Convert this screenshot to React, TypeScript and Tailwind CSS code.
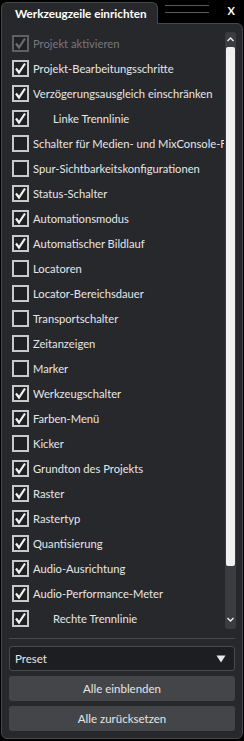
import React from "react";

type Item = { label: string; checked: boolean; indent?: boolean; disabled?: boolean };

const items: Item[] = [
  { label: "Projekt aktivieren", checked: true, disabled: true },
  { label: "Projekt-Bearbeitungsschritte", checked: true },
  { label: "Verzögerungsausgleich einschränken", checked: true },
  { label: "Linke Trennlinie", checked: true, indent: true },
  { label: "Schalter für Medien- und MixConsole-Fenster", checked: false },
  { label: "Spur-Sichtbarkeitskonfigurationen", checked: false },
  { label: "Status-Schalter", checked: true },
  { label: "Automationsmodus", checked: true },
  { label: "Automatischer Bildlauf", checked: true },
  { label: "Locatoren", checked: false },
  { label: "Locator-Bereichsdauer", checked: false },
  { label: "Transportschalter", checked: false },
  { label: "Zeitanzeigen", checked: false },
  { label: "Marker", checked: false },
  { label: "Werkzeugschalter", checked: true },
  { label: "Farben-Menü", checked: true },
  { label: "Kicker", checked: false },
  { label: "Grundton des Projekts", checked: true },
  { label: "Raster", checked: true },
  { label: "Rastertyp", checked: true },
  { label: "Quantisierung", checked: true },
  { label: "Audio-Ausrichtung", checked: true },
  { label: "Audio-Performance-Meter", checked: true },
  { label: "Rechte Trennlinie", checked: true, indent: true },
];

function Box({ checked, disabled }: { checked: boolean; disabled?: boolean }) {
  const col = disabled ? "#6a6b6e" : "#f2f2f2";
  return (
    <div
      className={
        "w-[17px] h-[17px] shrink-0 border-2 bg-[#1f2023] flex items-center justify-center " +
        (disabled ? "border-[#5f6063]" : "border-[#c9c9c9]")
      }
    >
      {checked && (
        <svg width="13" height="13" viewBox="0 0 13 13">
          <path d="M2 6.5 L5 10.5 L11 1.5" fill="none" stroke={col} strokeWidth="2.2" />
        </svg>
      )}
    </div>
  );
}

export default function App() {
  return (
    <div className="w-[244px] h-[741px] bg-black relative overflow-hidden font-[family-name:Lato,sans-serif]">
      {/* top bar */}
      <div className="flex items-end h-[23px] pl-[1px]">
        <div className="relative z-10 w-[157px] shrink-0 h-[22px] -mb-px bg-[#27282c] border border-b-0 border-[#47484c] rounded-t-[6px] flex items-center pl-[13px] overflow-hidden">
          <span className="text-[11.7px] font-bold text-white leading-none whitespace-nowrap">
            Werkzeugzeile einrichten
          </span>
        </div>
        <div className="flex-1 self-start flex items-start">
          <div className="ml-[7px] mt-[5px] w-[44px] flex flex-col gap-[6px]">
            <div className="h-px bg-[#5a5a5d]" />
            <div className="h-px bg-[#5a5a5d]" />
          </div>
          <div className="ml-auto mr-[9px] mt-[5px] text-[11px] font-bold text-white leading-none">X</div>
        </div>
      </div>

      {/* panel */}
      <div className="mx-[1px] h-[716px] bg-[#27282c] border border-[#47484c] rounded-b-[6px] rounded-tr-[6px] flex flex-col px-[7px] pt-[7px]">
        <div className="flex h-[600px]">
          <div className="flex-1 min-w-0 overflow-hidden">
            {items.map((it, i) => (
              <div key={i} className="h-[25px] flex items-center pl-[3px]">
                <Box checked={it.checked} disabled={it.disabled} />
                <span
                  className={
                    "whitespace-nowrap text-[11.2px] leading-none " +
                    (it.indent ? "ml-[24px] " : "ml-[4px] ") +
                    (it.disabled ? "text-[#77787b]" : "text-[#e6e6e6]")
                  }
                >
                  {it.label}
                </span>
              </div>
            ))}
          </div>
          <div className="w-[11px] ml-[1px] mr-[-1px] mt-[1px] mb-[2px] bg-[#3b3c40] rounded-[3px] flex flex-col items-center">
            <svg width="9" height="9" viewBox="0 0 9 9" className="mt-[3px]">
              <path d="M1.5 6 L4.5 3 L7.5 6" fill="none" stroke="#f0f0f0" strokeWidth="1.4" />
            </svg>
            <div className="w-[9px] h-[519px] mt-[3px] bg-[#f0f0f0] rounded-[2px]" />
            <div className="flex-1" />
            <svg width="9" height="9" viewBox="0 0 9 9" className="mb-[5px]">
              <path d="M1.5 3 L4.5 6 L7.5 3" fill="none" stroke="#f0f0f0" strokeWidth="1.4" />
            </svg>
          </div>
        </div>

        <div className="h-px bg-[#47484c] mt-[7px]" />

        <div className="mt-[7px] h-[25px] bg-[#1d1e21] border border-[#4a4b4f] rounded-[3px] flex items-center px-[5px]">
          <span className="text-[11.5px] text-[#e6e6e6] leading-none">Preset</span>
          <svg width="10" height="8" viewBox="0 0 10 8" className="ml-auto mr-[3px]">
            <path d="M0.5 0.5 L9.5 0.5 L5 7.5 Z" fill="#e8e8e8" />
          </svg>
        </div>
        <div className="mt-[5px] h-[25px] bg-[#444549] rounded-[3px] flex items-center justify-center">
          <span className="text-[11.5px] text-[#e6e6e6] leading-none">Alle einblenden</span>
        </div>
        <div className="mt-[5px] h-[25px] bg-[#444549] rounded-[3px] flex items-center justify-center">
          <span className="text-[11.5px] text-[#e6e6e6] leading-none">Alle zurücksetzen</span>
        </div>
      </div>
    </div>
  );
}
